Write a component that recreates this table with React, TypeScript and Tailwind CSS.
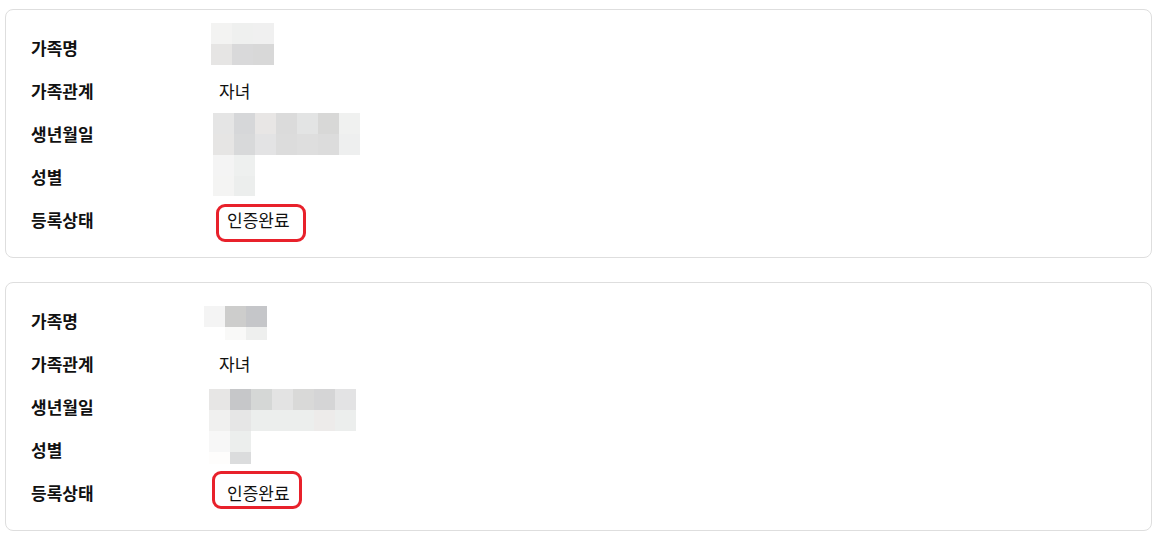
import type { ReactNode } from "react";

// mosaic cells: each row is a list of tailwind bg classes ("" = transparent)
interface Mosaic {
    left: string;
    top: string;
    rows: string[][];
    rowHeights: string[];
}

interface Member {
    relation: string;
    status: string;
    nameMosaic: Mosaic;
    birthMosaic: Mosaic;
    genderMosaic: Mosaic;
    badgeOffset: string;
}

const members: Member[] = [
    {
        relation: "자녀",
        status: "인증완료",
        nameMosaic: {
            left: "left-[-8px]",
            top: "top-[-3px]",
            rows: [
                ["bg-[#f3f3f2]", "bg-[#eff0ef]", "bg-[#f0f0f0]"],
                ["bg-[#e6e5e4]", "bg-[#d9d9da]", "bg-[#d8d8d8]"],
            ],
            rowHeights: ["h-[21px]", "h-[21px]"],
        },
        birthMosaic: {
            left: "left-[-6px]",
            top: "top-[1px]",
            rows: [
                ["bg-[#e5e5e5]", "bg-[#d6d7d9]", "bg-[#e8e6e5]", "bg-[#dbdbdb]", "bg-[#e3e4e4]", "bg-[#d8d8d7]", "bg-[#f0f1f0]"],
                ["bg-[#e6e5e4]", "bg-[#d8d9da]", "bg-[#e3e3e4]", "bg-[#dcdcdc]", "bg-[#dedede]", "bg-[#dcdcdc]", "bg-[#eeefef]"],
            ],
            rowHeights: ["h-[21px]", "h-[21px]"],
        },
        genderMosaic: {
            left: "left-[-6px]",
            top: "top-[0px]",
            rows: [
                ["bg-[#f4f4f4]", "bg-[#eef0ef]"],
                ["bg-[#f4f4f3]", "bg-[#eceeed]"],
            ],
            rowHeights: ["h-[21px]", "h-[20px]"],
        },
        badgeOffset: "left-[-3px] top-[6px]",
    },
    {
        relation: "자녀",
        status: "인증완료",
        nameMosaic: {
            left: "left-[-15px]",
            top: "top-[7px]",
            rows: [
                ["bg-[#f4f4f4]", "bg-[#cdcdcc]", "bg-[#c5c6c9]"],
                ["", "bg-[#f9f9f8]", "bg-[#eeefee]"],
            ],
            rowHeights: ["h-[21px]", "h-[13px]"],
        },
        birthMosaic: {
            left: "left-[-10px]",
            top: "top-[4px]",
            rows: [
                ["bg-[#e7e6e5]", "bg-[#c6c7c9]", "bg-[#d5d7d6]", "bg-[#e3e3e3]", "bg-[#d9d9d8]", "bg-[#d5d5d6]", "bg-[#e3e3e4]"],
                ["bg-[#f0f0ef]", "bg-[#e6e6e6]", "bg-[#eceeed]", "bg-[#eceeed]", "bg-[#eceeed]", "bg-[#edebea]", "bg-[#eceeed]"],
            ],
            rowHeights: ["h-[21px]", "h-[21px]"],
        },
        genderMosaic: {
            left: "left-[-10px]",
            top: "top-[3px]",
            rows: [
                ["bg-[#f7f7f7]", "bg-[#eceeed]"],
                ["bg-[#fefdfc]", "bg-[#dbdcdd]"],
            ],
            rowHeights: ["h-[21px]", "h-[12px]"],
        },
        badgeOffset: "left-[-7px] top-[0px]",
    },
];

function Pixelated({ mosaic }: { mosaic: Mosaic }) {
    return (
        <div className={`absolute ${mosaic.left} ${mosaic.top} flex flex-col`}>
            {mosaic.rows.map((row, i) => (
                <div key={i} className="flex">
                    {row.map((cell, j) => (
                        <div key={j} className={`w-[21px] ${mosaic.rowHeights[i]} ${cell}`} />
                    ))}
                </div>
            ))}
        </div>
    );
}

function Row({ label, children }: { label: string; children?: ReactNode }) {
    return (
        <div className="flex h-[43px] items-center">
            <div className="w-[188px] shrink-0 text-[17px] font-bold text-[#111]">{label}</div>
            <div className="relative flex h-full flex-1 items-center text-[17px] text-[#111]">{children}</div>
        </div>
    );
}

function MemberCard({ member }: { member: Member }) {
    return (
        <div className="rounded-lg border border-[#dedede] bg-white pb-4 pl-[25px] pt-4">
            <Row label="가족명">
                <Pixelated mosaic={member.nameMosaic} />
            </Row>
            <Row label="가족관계">
                <span>{member.relation}</span>
            </Row>
            <Row label="생년월일">
                <Pixelated mosaic={member.birthMosaic} />
            </Row>
            <Row label="성별">
                <Pixelated mosaic={member.genderMosaic} />
            </Row>
            <Row label="등록상태">
                <span className="pl-2">{member.status}</span>
                {/* red highlight box drawn over the status */}
                <div className={`absolute ${member.badgeOffset} h-[38px] w-[90px] rounded-[9px] border-[3px] border-[#e8212b]`} />
            </Row>
        </div>
    );
}

export default function App() {
    return (
        <div
            className="min-h-screen bg-white px-[5px] pt-[9px]"
            style={{ fontFamily: '"Noto Sans CJK KR", "Noto Sans", sans-serif' }}
        >
            <div className="mr-[4px] flex flex-col gap-[24px]">
                {members.map((m, i) => (
                    <MemberCard key={i} member={m} />
                ))}
            </div>
        </div>
    );
}
